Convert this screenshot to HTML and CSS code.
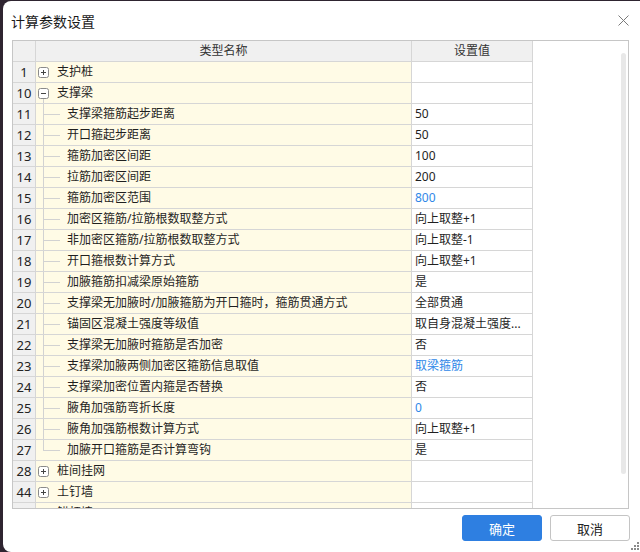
FILE: index.html
```html
<!DOCTYPE html>
<html>
<head>
<meta charset="utf-8">
<title>计算参数设置</title>
<link rel="stylesheet" href="styles.css">
</head>
<body>
<div class="dialog">
  <div class="titlebar">
    <span class="title">计算参数设置</span>
    <svg class="close" viewBox="0 0 11 11" width="11" height="11"><path d="M0.5 0.5L10.5 10.5M10.5 0.5L0.5 10.5" stroke="#7a7a7a" stroke-width="1" fill="none"/></svg>
  </div>
  <div class="tablebox">
    <div class="grid">
      <div class="hc"></div><div class="hc">类型名称</div><div class="hc">设置值</div>

      <div class="num">1</div><div class="name"><svg class="exp" viewBox="0 0 11 11"><rect x="0.5" y="0.5" width="10" height="10" rx="2" fill="#fff" stroke="#8a8a8a"/><path d="M3 5.5H8M5.5 3V8" stroke="#444" stroke-width="1"/></svg>支护桩</div><div class="val"></div>

      <div class="num">10</div><div class="name open"><svg class="exp" viewBox="0 0 11 11"><rect x="0.5" y="0.5" width="10" height="10" rx="2" fill="#fff" stroke="#8a8a8a"/><path d="M3 5.5H8" stroke="#444" stroke-width="1"/></svg>支撑梁</div><div class="val"></div>

      <div class="num">11</div><div class="name"><span class="branch"></span>支撑梁箍筋起步距离</div><div class="val">50</div>
      <div class="num">12</div><div class="name"><span class="branch"></span>开口箍起步距离</div><div class="val">50</div>
      <div class="num">13</div><div class="name"><span class="branch"></span>箍筋加密区间距</div><div class="val">100</div>
      <div class="num">14</div><div class="name"><span class="branch"></span>拉筋加密区间距</div><div class="val">200</div>
      <div class="num">15</div><div class="name"><span class="branch"></span>箍筋加密区范围</div><div class="val blue">800</div>
      <div class="num">16</div><div class="name"><span class="branch"></span>加密区箍筋/拉筋根数取整方式</div><div class="val">向上取整+1</div>
      <div class="num">17</div><div class="name"><span class="branch"></span>非加密区箍筋/拉筋根数取整方式</div><div class="val">向上取整-1</div>
      <div class="num">18</div><div class="name"><span class="branch"></span>开口箍根数计算方式</div><div class="val">向上取整+1</div>
      <div class="num">19</div><div class="name"><span class="branch"></span>加腋箍筋扣减梁原始箍筋</div><div class="val">是</div>
      <div class="num">20</div><div class="name"><span class="branch"></span>支撑梁无加腋时/加腋箍筋为开口箍时，箍筋贯通方式</div><div class="val">全部贯通</div>
      <div class="num">21</div><div class="name"><span class="branch"></span>锚固区混凝土强度等级值</div><div class="val">取自身混凝土强度...</div>
      <div class="num">22</div><div class="name"><span class="branch"></span>支撑梁无加腋时箍筋是否加密</div><div class="val">否</div>
      <div class="num">23</div><div class="name"><span class="branch"></span>支撑梁加腋两侧加密区箍筋信息取值</div><div class="val blue">取梁箍筋</div>
      <div class="num">24</div><div class="name"><span class="branch"></span>支撑梁加密位置内箍是否替换</div><div class="val">否</div>
      <div class="num">25</div><div class="name"><span class="branch"></span>腋角加强筋弯折长度</div><div class="val blue">0</div>
      <div class="num">26</div><div class="name"><span class="branch"></span>腋角加强筋根数计算方式</div><div class="val">向上取整+1</div>
      <div class="num">27</div><div class="name"><span class="branch last"></span>加腋开口箍筋是否计算弯钩</div><div class="val">是</div>

      <div class="num">28</div><div class="name"><svg class="exp" viewBox="0 0 11 11"><rect x="0.5" y="0.5" width="10" height="10" rx="2" fill="#fff" stroke="#8a8a8a"/><path d="M3 5.5H8M5.5 3V8" stroke="#444" stroke-width="1"/></svg>桩间挂网</div><div class="val"></div>
      <div class="num">44</div><div class="name"><svg class="exp" viewBox="0 0 11 11"><rect x="0.5" y="0.5" width="10" height="10" rx="2" fill="#fff" stroke="#8a8a8a"/><path d="M3 5.5H8M5.5 3V8" stroke="#444" stroke-width="1"/></svg>土钉墙</div><div class="val"></div>
      <div class="num">60</div><div class="name"><svg class="exp" viewBox="0 0 11 11"><rect x="0.5" y="0.5" width="10" height="10" rx="2" fill="#fff" stroke="#8a8a8a"/><path d="M3 5.5H8M5.5 3V8" stroke="#444" stroke-width="1"/></svg>锚杆墙</div><div class="val"></div>
    </div>
    <div class="vscroll"></div>
  </div>
  <div class="footer">
    <button class="btn primary">确定</button>
    <button class="btn">取消</button>
  </div>
  <svg class="grip" viewBox="0 0 10 9" width="10" height="9">
    <rect x="8" y="0" width="2" height="2" fill="#8a8a8a"/>
    <rect x="5" y="3" width="2" height="2" fill="#8a8a8a"/>
    <rect x="8" y="3" width="2" height="2" fill="#8a8a8a"/>
    <rect x="2" y="6" width="2" height="2" fill="#8a8a8a"/>
    <rect x="5" y="6" width="2" height="2" fill="#8a8a8a"/>
    <rect x="8" y="6" width="2" height="2" fill="#8a8a8a"/>
  </svg>
</div>
</body>
</html>
```

FILE: styles.css
```css
html, body {
  margin: 0;
  padding: 0;
}
body {
  background: #2e2430;
  width: 640px;
  height: 552px;
  overflow: hidden;
  font-family: "Noto Sans", "Noto Sans CJK SC", sans-serif;
  padding-top: 1px;
  box-sizing: border-box;
}
.dialog {
  position: relative;
  margin-left: 3px;
  width: 637px;
  height: 551px;
  background: #fff;
  border-radius: 8px 0 0 8px;
}
.titlebar {
  height: 39px;
  display: flex;
  align-items: center;
  justify-content: space-between;
  padding: 0 11px 0 8px;
  box-sizing: border-box;
}
.title {
  font-family: "Noto Sans CJK SC", sans-serif;
  font-size: 14px;
  color: #1a1a1a;
}
.close {
  display: block;
}
.tablebox {
  margin-left: 9px;
  width: 617px;
  height: 469px;
  box-sizing: border-box;
  border: 1px solid #c6c6c6;
  display: flex;
  overflow: hidden;
}
.grid {
  flex: none;
  display: grid;
  grid-template-columns: 23px 376px 121px;
  grid-auto-rows: 21px;
  align-content: start;
  font-size: 12px;
  color: #1f1f1f;
}
.grid > div {
  box-sizing: border-box;
  border-right: 1px solid #d6d6d6;
  border-bottom: 1px solid #d6d6d6;
  line-height: 20px;
  white-space: nowrap;
  overflow: hidden;
}
.hc {
  background: #f0f0f0;
  text-align: center;
  color: #333;
}
.num {
  background: #f0f0f0;
  text-align: center;
  font-size: 13px;
  color: #222;
}
.name {
  background: #fffbe6;
  display: flex;
  align-items: center;
}
.name.open {
  background: linear-gradient(#cfcfcf, #cfcfcf) 7px 15px / 1px 5px no-repeat, #fffbe6;
}
.val {
  padding-left: 3px;
}
.blue {
  color: #2f88e8;
}
.exp {
  width: 11px;
  height: 11px;
  margin: 0 8px 0 2px;
  flex: none;
}
.branch {
  align-self: stretch;
  width: 31px;
  flex: none;
  background:
    linear-gradient(#d2d2d2, #d2d2d2) 7px 0 / 1px 100% no-repeat,
    linear-gradient(#d2d2d2, #d2d2d2) 7px 10px / 17px 1px no-repeat;
}
.branch.last {
  background:
    linear-gradient(#d2d2d2, #d2d2d2) 7px 0 / 1px 11px no-repeat,
    linear-gradient(#d2d2d2, #d2d2d2) 7px 10px / 17px 1px no-repeat;
}
.vscroll {
  flex: none;
  margin: 12px 2px 0 auto;
  width: 5px;
  height: 421px;
  border-radius: 3px;
  background: #e8e8e8;
}
.footer {
  display: flex;
  justify-content: flex-end;
  gap: 8px;
  margin-top: 6px;
  padding-right: 10px;
}
.btn {
  width: 80px;
  height: 26px;
  padding: 0;
  border-radius: 3px;
  border: 1px solid #c4c4c4;
  background: #fff;
  font-family: "Noto Sans CJK SC", sans-serif;
  font-size: 13px;
  color: #222;
}
.btn.primary {
  background: #2e7fe1;
  border-color: #2e7fe1;
  color: #fff;
}
.grip {
  position: absolute;
  right: 1px;
  bottom: 1px;
}
```
